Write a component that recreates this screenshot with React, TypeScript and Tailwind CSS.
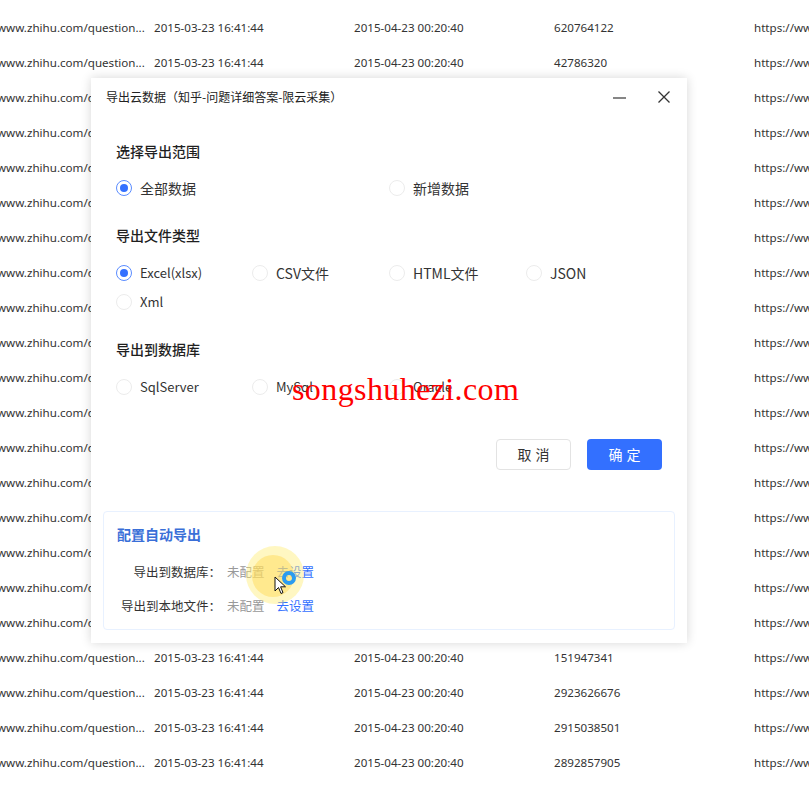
import React from 'react';

const FONT = '"Noto Sans", "Noto Sans CJK SC", sans-serif';
const CJK = '"Noto Sans CJK SC", sans-serif';

const IDS = [
  '620764122', '42786320', '43520971', '27418822', '318904512', '52187340',
  '90127735', '264019873', '71234590', '168320417', '30987611', '552109823',
  '41866720', '210987346', '86531902', '73324109', '68410275', '29910384',
  '151947341', '2923626676', '2915038501', '2892857905',
];

function Radio({
  label,
  checked = false,
  small = false,
  className = '',
}: {
  label: string;
  checked?: boolean;
  small?: boolean;
  className?: string;
}) {
  return (
    <div className={`flex items-center h-[20px] ${className}`}>
      <span
        className={`w-[16px] h-[16px] rounded-full border flex items-center justify-center shrink-0 ${
          checked ? 'border-[#5a8cff]' : 'border-[#ececec]'
        }`}
      >
        {checked && <span className="w-[8px] h-[8px] rounded-full bg-[#3370ff]" />}
      </span>
      <span className={`ml-[8px] text-[#333] whitespace-nowrap ${small ? 'text-[13px]' : 'text-[14px]'}`}>
        {label}
      </span>
    </div>
  );
}

function SectionTitle({ children }: { children: React.ReactNode }) {
  return <div className="h-[20px] leading-[20px] text-[14px] font-medium text-[#1f1f1f]">{children}</div>;
}

export default function App() {
  return (
    <div className="relative w-[809px] h-[790px] overflow-hidden bg-white" style={{ fontFamily: FONT }}>
      {/* background table */}
      <div className="pt-[10px]">
        {IDS.map((id, i) => (
          <div key={i} className="flex h-[35px] items-center text-[11.6px] text-[#333] whitespace-nowrap">
            <div className="w-[145px] shrink-0 overflow-hidden">
              <span className="block -ml-[3px]">www.zhihu.com/question...</span>
            </div>
            <div className="w-[200px] shrink-0 pl-[9px]">2015-03-23 16:41:44</div>
            <div className="w-[200px] shrink-0 pl-[9px]">2015-04-23 00:20:40</div>
            <div className="w-[200px] shrink-0 pl-[9px]">{id}</div>
            <div className="w-[200px] shrink-0 pl-[9px]">https://www.zhihu.com/people</div>
          </div>
        ))}
      </div>

      {/* export dialog */}
      <div className="absolute left-[91px] top-[78px] w-[596px] h-[565px] bg-white shadow-[0_0_10px_rgba(0,0,0,0.16)] flex flex-col">
        <div className="h-[38px] flex items-center pl-[15px] pr-[17px]">
          <span className="flex-1 text-[12px] text-[#222]" style={{ fontFamily: CJK }}>
            导出云数据（知乎-问题详细答案-限云采集）
          </span>
          <svg width="13" height="13" viewBox="0 0 13 13" className="mr-[32px]">
            <line x1="0" y1="7" x2="13" y2="7" stroke="#444" strokeWidth="1.3" />
          </svg>
          <svg width="12" height="12" viewBox="0 0 12 12">
            <path d="M0.5 0.5 L11.5 11.5 M11.5 0.5 L0.5 11.5" stroke="#333" strokeWidth="1.3" fill="none" />
          </svg>
        </div>

        <div className="px-[25px] pt-[25px]" style={{ fontFamily: CJK }}>
          <SectionTitle>选择导出范围</SectionTitle>
          <div className="grid grid-cols-[136px_137px_137px_137px] mt-[17px]">
            <Radio label="全部数据" checked />
            <Radio label="新增数据" className="col-start-3" />
          </div>

          <div className="mt-[27px]">
            <SectionTitle>导出文件类型</SectionTitle>
          </div>
          <div className="grid grid-cols-[136px_137px_137px_137px] gap-y-[9px] mt-[18px]">
            <Radio label="Excel(xlsx)" checked small />
            <Radio label="CSV文件" />
            <Radio label="HTML文件" />
            <Radio label="JSON" />
            <Radio label="Xml" small />
          </div>

          <div className="mt-[27px]">
            <SectionTitle>导出到数据库</SectionTitle>
          </div>
          <div className="grid grid-cols-[136px_137px_137px_137px] mt-[18px]">
            <Radio label="SqlServer" small />
            <Radio label="MySql" small />
            <Radio label="Oracle" small />
          </div>

          <div className="flex justify-end gap-[16px] mt-[42px]">
            <button className="w-[75px] h-[31px] rounded-[4px] border border-[#e3e3e3] bg-white text-[14px] text-[#333] tracking-[4px] pl-[4px]">
              取消
            </button>
            <button className="w-[75px] h-[31px] rounded-[4px] bg-[#3370ff] text-[14px] text-white tracking-[4px] pl-[4px]">
              确定
            </button>
          </div>
        </div>

        <div
          className="mx-[12px] mt-[41px] rounded-[4px] border border-[#e8f1ff] pl-[13px] pt-[12px] pb-[13px] text-[12.5px]"
          style={{ fontFamily: CJK }}
        >
          <div className="h-[20px] leading-[20px] text-[14px] font-bold text-[#3a6fd8]">配置自动导出</div>
          <div className="flex items-center h-[20px] mt-[18px]">
            <span className="w-[104px] text-right text-[#333]">导出到数据库：</span>
            <span className="ml-[6px] text-[#999]">未配置</span>
            <span className="ml-[12px] text-[#3370ff]">去设置</span>
          </div>
          <div className="flex items-center h-[20px] mt-[14px]">
            <span className="w-[104px] text-right text-[#333]">导出到本地文件：</span>
            <span className="ml-[6px] text-[#999]">未配置</span>
            <span className="ml-[12px] text-[#3370ff]">去设置</span>
          </div>
        </div>
      </div>

      {/* watermark */}
      <div
        className="absolute left-[292px] top-[369px] text-[32px] leading-[40px] tracking-[0.4px] text-[#ff0000] whitespace-nowrap"
        style={{ fontFamily: '"Liberation Serif", serif' }}
      >
        songshuhezi.com
      </div>

      {/* cursor highlight */}
      <div className="absolute left-[246px] top-[546px] w-[58px] h-[58px] rounded-full bg-[rgba(255,238,120,0.45)]" />
      <div className="absolute left-[252px] top-[555px] w-[42px] h-[42px] rounded-full bg-[rgba(255,214,80,0.45)]" />
      <div className="absolute left-[282px] top-[571px] w-[14px] h-[14px] rounded-full border-[4px] border-[#2b9cf0]" />
      <svg className="absolute left-[274px] top-[576px]" width="13" height="20" viewBox="0 0 13 20">
        <path d="M1 1 L1 15 L4.5 11.5 L7 17.5 L9 16.6 L6.6 10.8 L11.5 10.8 Z" fill="#fff" stroke="#111" strokeWidth="1" />
      </svg>
    </div>
  );
}
